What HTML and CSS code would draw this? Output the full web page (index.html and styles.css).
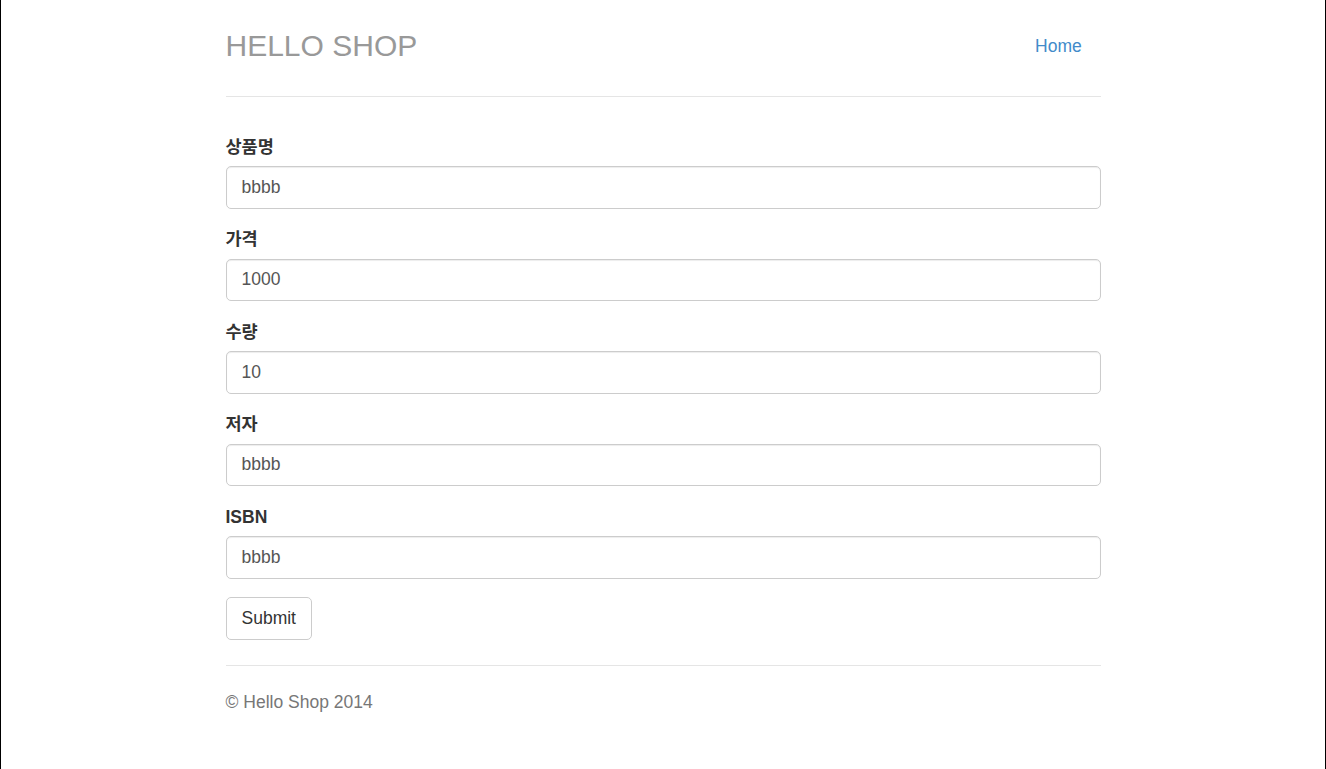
FILE: index.html
```html
<!DOCTYPE html>
<html lang="ko">
<head>
<meta charset="utf-8">
<title>Hello Shop</title>
<link rel="stylesheet" href="styles.css">
</head>
<body>
<div class="container">
  <div class="header">
    <h3 class="brand">HELLO SHOP</h3>
    <ul class="nav">
      <li><a href="#">Home</a></li>
    </ul>
  </div>
  <form class="item-form">
    <div class="form-group">
      <label for="name">상품명</label>
      <input id="name" class="form-control" type="text" value="bbbb">
    </div>
    <div class="form-group">
      <label for="price">가격</label>
      <input id="price" class="form-control" type="text" value="1000">
    </div>
    <div class="form-group">
      <label for="qty">수량</label>
      <input id="qty" class="form-control" type="text" value="10">
    </div>
    <div class="form-group">
      <label for="author">저자</label>
      <input id="author" class="form-control" type="text" value="bbbb">
    </div>
    <div class="form-group">
      <label for="isbn">ISBN</label>
      <input id="isbn" class="form-control" type="text" value="bbbb">
    </div>
    <button type="button" class="btn">Submit</button>
  </form>
  <div class="footer">
    <p>© Hello Shop 2014</p>
  </div>
</div>
</body>
</html>
```

FILE: styles.css
```css
html, body {
  margin: 0;
  padding: 0;
}
body {
  min-height: 100vh;
  box-sizing: border-box;
  border-left: 1px solid #000;
  border-right: 1px solid #000;
  background: #fff;
  font-family: "Liberation Sans", Arial, "Noto Sans CJK KR", sans-serif;
  font-size: 17.5px;
  line-height: 25px;
  color: #333;
  padding-top: 21px;
}
.container {
  width: 875px;
  margin: 0 auto;
}
.header {
  display: flex;
  justify-content: space-between;
  align-items: flex-start;
  padding-bottom: 25px;
  border-bottom: 1px solid #e5e5e5;
}
.brand {
  margin: 0;
  font-size: 30px;
  line-height: 50px;
  font-weight: normal;
  color: #999;
}
.nav {
  list-style: none;
  margin: 0;
  padding: 0;
  display: flex;
}
.nav a {
  display: block;
  padding: 12.5px 18.75px;
  color: #428bca;
  text-decoration: none;
  border-radius: 5px;
}
.item-form {
  margin-top: 37.75px;
}
.form-group {
  margin-bottom: 18.75px;
}
.form-group label {
  display: block;
  margin-bottom: 6.25px;
  font-weight: bold;
  color: #333;
}
.form-control {
  display: block;
  width: 100%;
  height: 42.5px;
  box-sizing: border-box;
  padding: 7.5px 15px;
  font-family: inherit;
  font-size: 17.5px;
  line-height: 25px;
  color: #555;
  background: #fff;
  border: 1px solid #ccc;
  border-radius: 5px;
  box-shadow: inset 0 1px 1px rgba(0, 0, 0, 0.075);
  outline: none;
}
.btn {
  display: inline-block;
  height: 42.5px;
  box-sizing: border-box;
  padding: 7.5px 15px;
  font-family: inherit;
  font-size: 17.5px;
  line-height: 25px;
  color: #333;
  background: #fff;
  border: 1px solid #ccc;
  border-radius: 5px;
  cursor: pointer;
  vertical-align: top;
}
.footer {
  margin-top: 25.25px;
  padding-top: 23.75px;
  border-top: 1px solid #e5e5e5;
  color: #777;
}
.footer p {
  margin: 0 0 12.5px;
}
```
